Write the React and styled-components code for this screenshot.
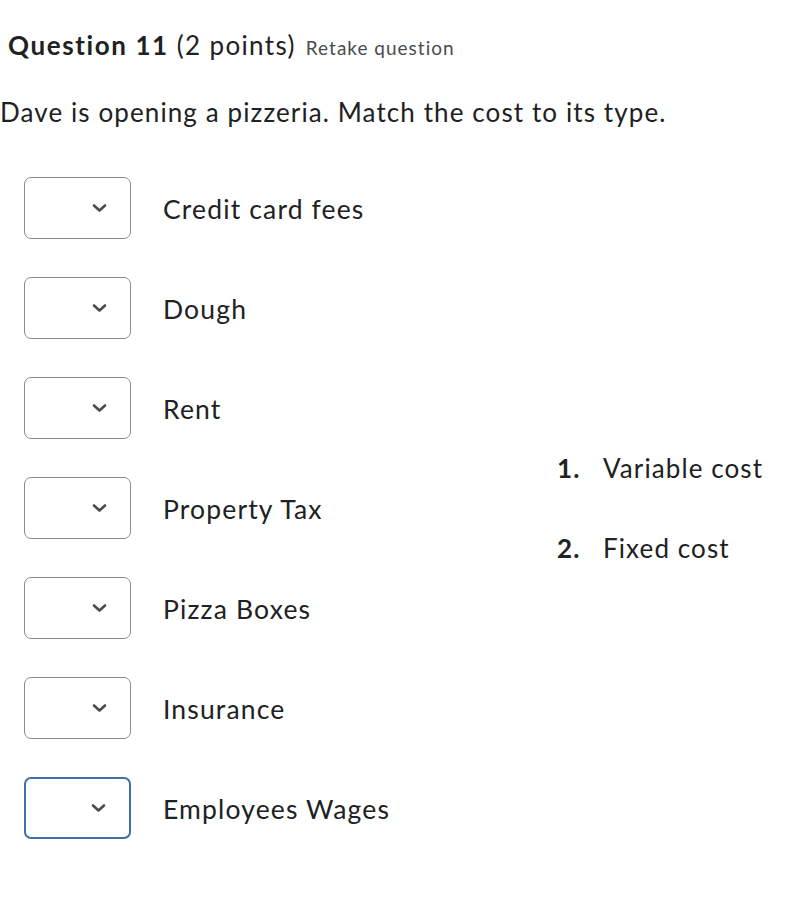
import React from 'react';
import styled, { createGlobalStyle } from 'styled-components';

const GlobalStyle = createGlobalStyle`
  body {
    margin: 0;
    background: #ffffff;
    font-family: Lato, "Noto Sans", sans-serif;
    color: #202122;
  }
`;

const Page = styled.div`
  padding: 28px 0 0 0;
`;

const Title = styled.h2`
  margin: 0 0 0 8px;
  font-size: 26px;
  font-weight: 400;
  line-height: 34px;
  letter-spacing: 1.35px;
  color: #202122;
`;

const Strong = styled.strong`
  font-weight: 700;
  letter-spacing: 1.6px;
`;

const Retake = styled.span`
  font-size: 19px;
  letter-spacing: 1px;
  color: #494c4e;
  margin-left: 2px;
`;

const Prompt = styled.p`
  margin: 30px 0 0 0;
  font-size: 26px;
  line-height: 34px;
  letter-spacing: 1.1px;
`;

const Matching = styled.div`
  display: flex;
  align-items: center;
  margin-top: 48px;
`;

const Rows = styled.div`
  display: flex;
  flex-direction: column;
  gap: 38px;
  padding-left: 24px;
  width: 533px;
`;

const Row = styled.div`
  display: flex;
  align-items: center;
  gap: 32px;
`;

const SelectBox = styled.div`
  box-sizing: border-box;
  width: 107px;
  height: 62px;
  border: ${(p) => (p.$focused ? '2px solid #3f6fa3' : '1.5px solid #8a8d90')};
  border-radius: 7px;
  display: flex;
  align-items: center;
  justify-content: flex-end;
  padding-right: 23px;
  background: #fff;
`;

const Label = styled.span`
  font-size: 26.5px;
  line-height: 34px;
  letter-spacing: 1.15px;
  padding-top: 2px;
`;

const Choices = styled.ol`
  list-style: none;
  margin: 0;
  padding: 0;
  display: flex;
  flex-direction: column;
  gap: 46px;
`;

const Choice = styled.li`
  display: flex;
  font-size: 26px;
  line-height: 34px;
  letter-spacing: 1.1px;
`;

const Num = styled.span`
  font-weight: 700;
  width: 46px;
`;

const Chevron = () => (
  <svg width="15" height="10" viewBox="0 0 15 10">
    <path d="M2 2.5l5.5 5 5.5-5" fill="none" stroke="#494c4e" strokeWidth="2.6" strokeLinecap="round" strokeLinejoin="round" />
  </svg>
);

const items = ['Credit card fees', 'Dough', 'Rent', 'Property Tax', 'Pizza Boxes', 'Insurance', 'Employees Wages'];

export default function App() {
  return (
    <Page>
      <GlobalStyle />
      <Title>
        <Strong>Question 11</Strong> (2 points) <Retake>Retake question</Retake>
      </Title>
      <Prompt>Dave is opening a pizzeria. Match the cost to its type.</Prompt>
      <Matching>
        <Rows>
          {items.map((item, i) => (
            <Row key={item}>
              <SelectBox $focused={i === items.length - 1}>
                <Chevron />
              </SelectBox>
              <Label>{item}</Label>
            </Row>
          ))}
        </Rows>
        <Choices>
          <Choice><Num>1.</Num>Variable cost</Choice>
          <Choice><Num>2.</Num>Fixed cost</Choice>
        </Choices>
      </Matching>
    </Page>
  );
}
